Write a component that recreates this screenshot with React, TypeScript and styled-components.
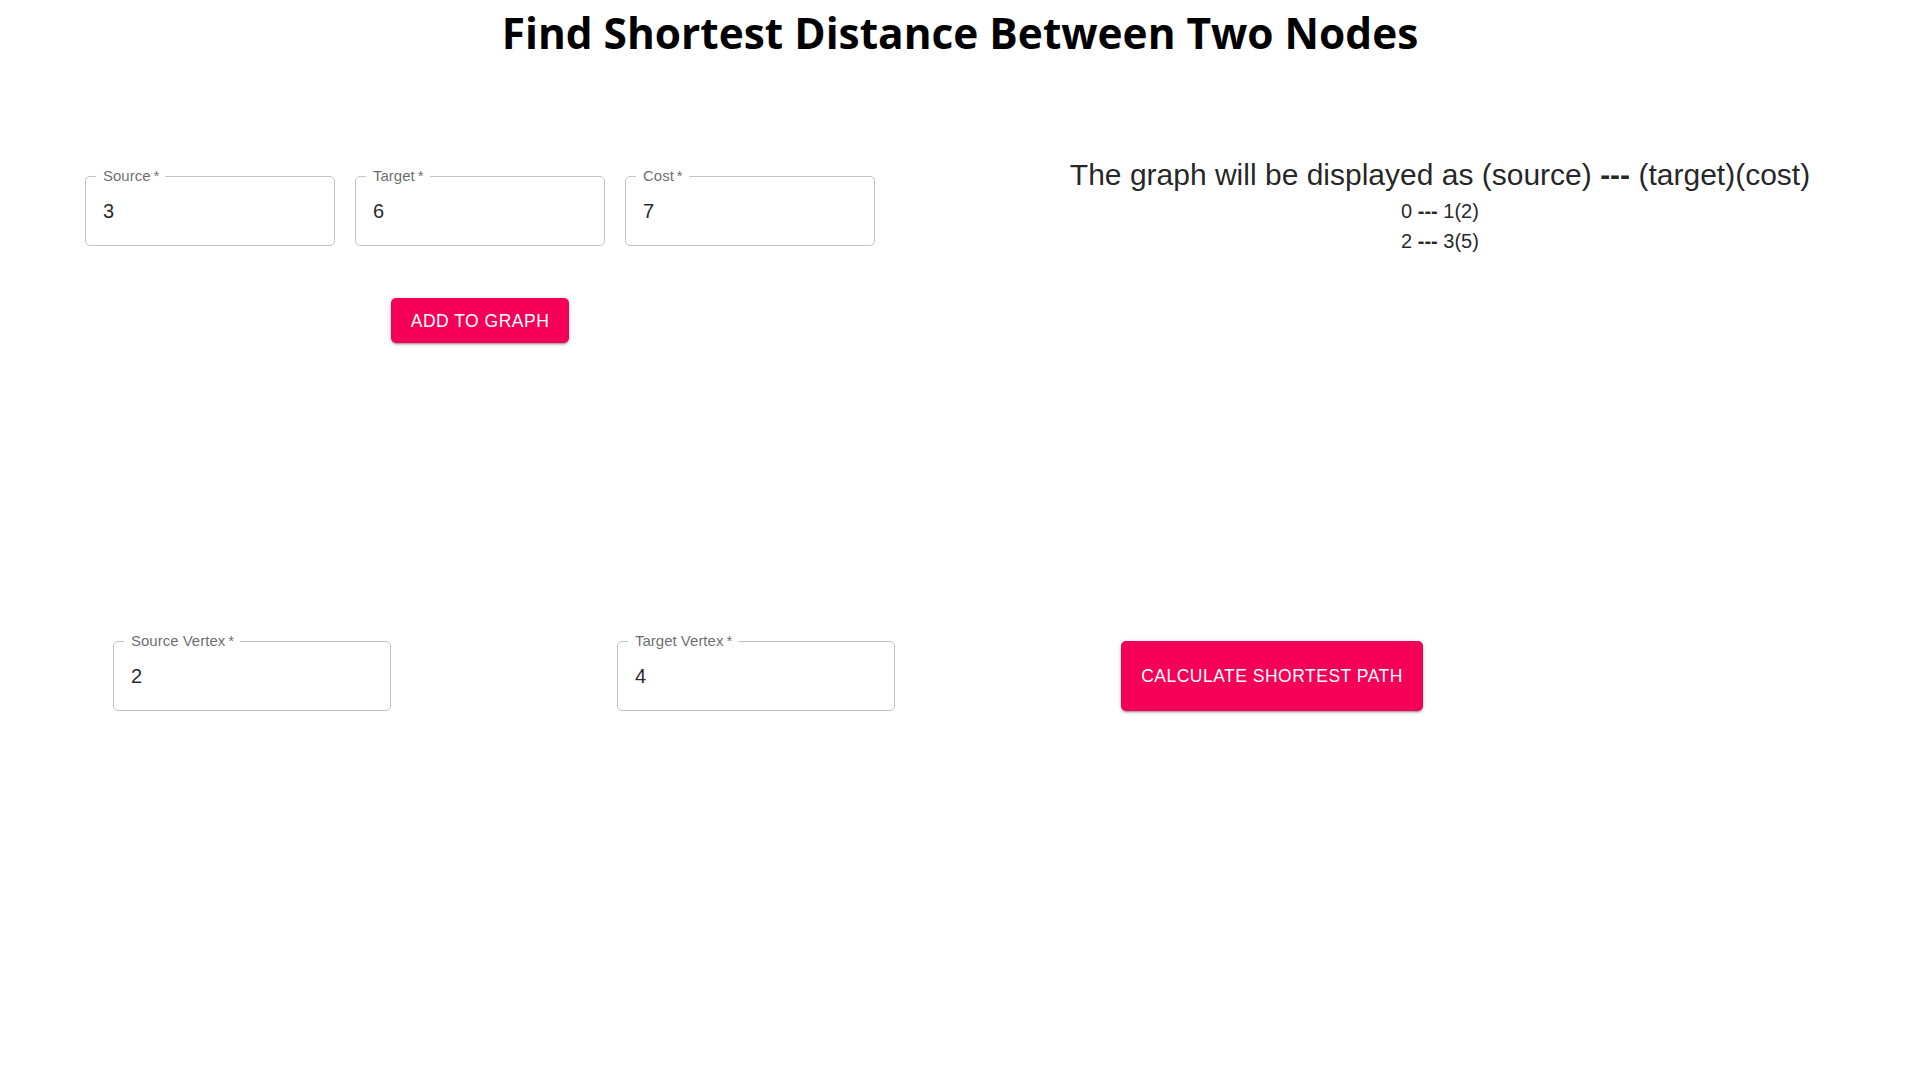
import React from "react";
import styled, { createGlobalStyle } from "styled-components";

const GlobalStyle = createGlobalStyle`
  html, body {
    margin: 0;
    padding: 0;
    background: #ffffff;
  }
  body {
    font-family: "Liberation Sans", Arial, Helvetica, sans-serif;
    color: rgba(0, 0, 0, 0.87);
  }
  * { box-sizing: border-box; }
`;

const Page = styled.div`
  width: 1920px;
  min-height: 1080px;
  display: flex;
  flex-direction: column;
`;

const Title = styled.h1`
  margin: 5px 0 0;
  text-align: center;
  font-family: "Open Sans", "Noto Sans", sans-serif;
  font-weight: 700;
  font-size: 42.4px;
  line-height: 56px;
  color: #000;
`;

const TopSection = styled.section`
  display: grid;
  grid-template-columns: 960px 960px;
  align-items: start;
  margin-top: 96px;
`;

const EdgeForm = styled.div`
  display: flex;
  flex-direction: column;
  align-items: center;
  padding-top: 19px;
`;

const FieldRow = styled.div`
  display: flex;
  gap: 20px;
`;

const Field = styled.label<{ $w: number }>`
  position: relative;
  display: flex;
  align-items: center;
  width: ${(p) => p.$w}px;
  height: 70px;
  border: 1px solid #c4c4c4;
  border-radius: 5px;
  padding: 0 17px;
`;

const FieldLabel = styled.span`
  position: absolute;
  top: -10px;
  left: 10px;
  padding: 0 6px 0 7px;
  background: #fff;
  font-size: 15px;
  line-height: 18px;
  color: rgba(0, 0, 0, 0.6);
  white-space: nowrap;
`;

const FieldInput = styled.input`
  border: none;
  outline: none;
  background: transparent;
  width: 100%;
  padding: 0;
  margin: 0;
  font-family: "Liberation Sans", Arial, Helvetica, sans-serif;
  font-size: 20px;
  line-height: 24px;
  color: rgba(0, 0, 0, 0.87);
`;

const PinkButton = styled.button<{ $big?: boolean }>`
  border: none;
  border-radius: 5px;
  background: #f50057;
  color: #fff;
  font-family: "Liberation Sans", Arial, Helvetica, sans-serif;
  font-weight: 400;
  font-size: 17.5px;
  letter-spacing: 0.5px;
  text-transform: uppercase;
  line-height: 30px;
  cursor: pointer;
  box-shadow: 0px 3px 1px -2px rgba(0, 0, 0, 0.2), 0px 2px 2px 0px rgba(0, 0, 0, 0.14),
    0px 1px 5px 0px rgba(0, 0, 0, 0.12);
  padding: ${(p) => (p.$big ? "20px 20px" : "7.5px 20px")};
  width: ${(p) => (p.$big ? "302px" : "auto")};
  height: ${(p) => (p.$big ? "70px" : "auto")};
`;

const AddButtonWrap = styled.div`
  margin-top: 52px;
`;

const GraphPanel = styled.div`
  display: flex;
  flex-direction: column;
  align-items: center;
  text-align: center;
`;

const GraphHeading = styled.div`
  font-size: 30px;
  line-height: 36px;
  margin-bottom: 3px;
  color: rgba(0, 0, 0, 0.87);
`;

const EdgeLine = styled.div`
  font-size: 20px;
  line-height: 30px;
  color: rgba(0, 0, 0, 0.87);
`;

const QueryRow = styled.section`
  display: grid;
  grid-template-columns: 504px 504px 504px;
  padding-left: 113px;
  margin-top: 298px;
  align-items: center;
`;

const edges = [
  { s: 0, t: 1, c: 2 },
  { s: 2, t: 3, c: 5 },
];

function OutlinedField({ label, value, width }: { label: string; value: string; width: number }) {
  return (
    <Field $w={width}>
      <FieldLabel>{label}{"\u2009*"}</FieldLabel>
      <FieldInput defaultValue={value} />
    </Field>
  );
}

export default function App() {
  return (
    <Page>
      <GlobalStyle />
      <Title>Find Shortest Distance Between Two Nodes</Title>
      <TopSection>
        <EdgeForm>
          <FieldRow>
            <OutlinedField label="Source" value="3" width={250} />
            <OutlinedField label="Target" value="6" width={250} />
            <OutlinedField label="Cost" value="7" width={250} />
          </FieldRow>
          <AddButtonWrap>
            <PinkButton>Add to graph</PinkButton>
          </AddButtonWrap>
        </EdgeForm>
        <GraphPanel>
          <GraphHeading>
            The graph will be displayed as (source) <b>---</b> (target)(cost)
          </GraphHeading>
          {edges.map((e) => (
            <EdgeLine key={`${e.s}-${e.t}`}>
              {e.s} <b>---</b> {e.t}({e.c})
            </EdgeLine>
          ))}
        </GraphPanel>
      </TopSection>
      <QueryRow>
        <div>
          <OutlinedField label="Source Vertex" value="2" width={278} />
        </div>
        <div>
          <OutlinedField label="Target Vertex" value="4" width={278} />
        </div>
        <div>
          <PinkButton $big>Calculate shortest path</PinkButton>
        </div>
      </QueryRow>
    </Page>
  );
}
